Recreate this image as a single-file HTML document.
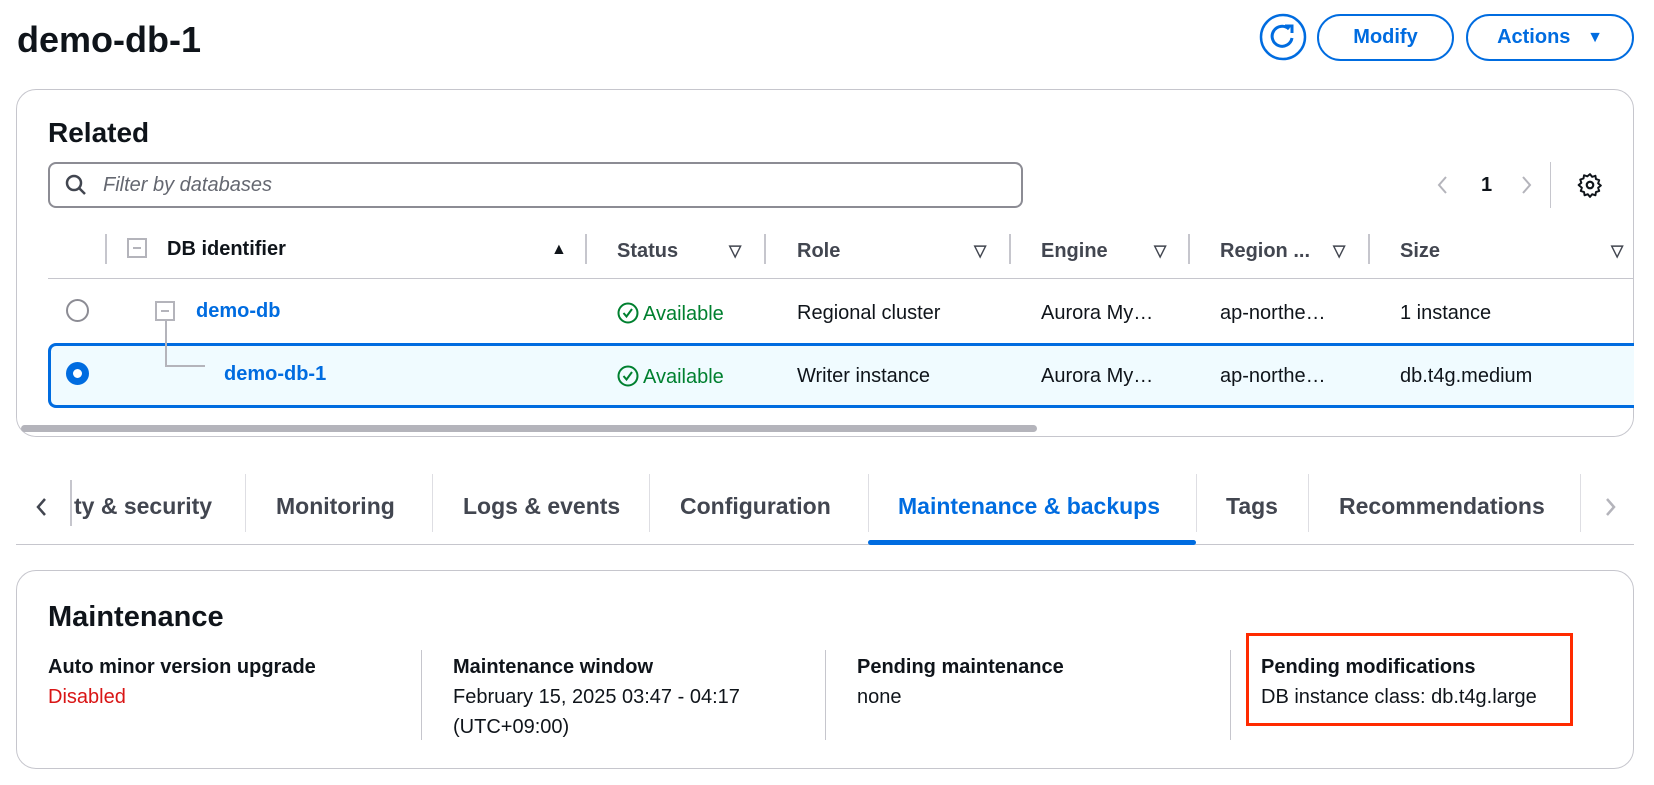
<!DOCTYPE html>
<html><head><meta charset="utf-8"><style>
*{box-sizing:border-box;margin:0;padding:0}
body{width:1654px;height:785px;background:#fff;font-family:"Liberation Sans",sans-serif;color:#0f141a;position:relative;overflow:hidden}
.a{position:absolute;white-space:nowrap}
.b{font-weight:bold}
.t{font-size:20px;line-height:22px}
.lnk{color:#006ce0;font-weight:bold}
.vd{position:absolute;width:2px;background:#c6c6cd}
.btn{position:absolute;border:2px solid #006ce0;border-radius:24px;color:#006ce0;font-weight:bold;font-size:20px;display:flex;align-items:center;justify-content:center;height:47px;top:14px}
.panel{position:absolute;border:1px solid #c6c6cd;border-radius:20px;left:16px;width:1618px}
.tab{position:absolute;top:493px;font-size:23px;font-weight:bold;color:#424650}
.tdv{position:absolute;top:474px;height:58px;width:1px;background:#dedee3}
.ok{color:#00802f}
.ok svg{vertical-align:-4px;margin-right:4px}
.srt{position:absolute;font-size:16px;color:#424650;font-weight:bold}
</style></head><body>
<div class="a b" style="left:17px;top:19px;font-size:36px;line-height:42px">demo-db-1</div>

<svg class="a" style="left:1259px;top:13px" width="48" height="48" viewBox="0 0 48 48"><circle cx="24" cy="24" r="22" fill="none" stroke="#006ce0" stroke-width="2.5"/><path d="M30 16 A10 10 0 1 0 33 25" fill="none" stroke="#006ce0" stroke-width="3"/><path d="M26 13 L33 13 L33 20" fill="none" stroke="#006ce0" stroke-width="3"/></svg>
<div class="btn" style="left:1317px;width:137px">Modify</div>
<div class="btn" style="left:1466px;width:168px">Actions&nbsp;&nbsp;&nbsp;<span style="font-size:16px">▼</span></div>

<div class="panel" style="top:89px;height:348px"></div>
<div class="a b" style="left:48px;top:117px;font-size:28px;line-height:32px">Related</div>
<div class="a" style="left:48px;top:162px;width:975px;height:46px;border:2px solid #8c8c94;border-radius:8px"></div>
<svg class="a" style="left:64px;top:173px" width="24" height="24" viewBox="0 0 24 24"><circle cx="10" cy="10" r="7" fill="none" stroke="#424650" stroke-width="2.5"/><path d="M15 15 L21 21" stroke="#424650" stroke-width="2.5"/></svg>
<div class="a t" style="left:103px;top:174px;font-style:italic;color:#656871">Filter by databases</div>
<svg class="a" style="left:1433px;top:173px" width="20" height="24"><path d="M13 4 L6 12 L13 20" fill="none" stroke="#b4b4bb" stroke-width="2"/></svg>
<div class="a b t" style="left:1481px;top:174px">1</div>
<svg class="a" style="left:1516px;top:173px" width="20" height="24"><path d="M7 4 L14 12 L7 20" fill="none" stroke="#b4b4bb" stroke-width="2"/></svg>
<div class="vd" style="left:1550px;top:162px;height:46px;width:1px"></div>
<svg class="a" style="left:1577px;top:172px" width="26" height="26" viewBox="0 0 24 24"><path d="M12 2 l2 2.5 3-1 .5 3 3 1-1 3 2.5 2-2.5 2 1 3-3 1-.5 3-3-1-2 2.5-2-2.5-3 1-.5-3-3-1 1-3L1.5 12 4 10 3 7l3-1 .5-3 3 1z" fill="none" stroke="#0f141a" stroke-width="1.8" stroke-linejoin="round"/><circle cx="12" cy="12" r="3" fill="none" stroke="#0f141a" stroke-width="2"/></svg>

<!-- header -->
<div class="vd" style="left:105px;top:234px;height:30px"></div>
<div class="a" style="left:127px;top:238px;width:20px;height:20px;border:2px solid #b4b4bb"><div style="position:absolute;left:4px;top:7px;width:8px;height:2px;background:#b4b4bb"></div></div>
<div class="a b t" style="left:167px;top:238px">DB identifier</div>
<div class="srt" style="left:551px;top:241px;color:#0f141a">▲</div>
<div class="vd" style="left:585px;top:234px;height:30px"></div>
<div class="a b t" style="left:617px;top:240px;color:#424650">Status</div>
<div class="srt" style="left:729px;top:241px">▽</div>
<div class="vd" style="left:764px;top:234px;height:30px"></div>
<div class="a b t" style="left:797px;top:240px;color:#424650">Role</div>
<div class="srt" style="left:974px;top:241px">▽</div>
<div class="vd" style="left:1009px;top:234px;height:30px"></div>
<div class="a b t" style="left:1041px;top:240px;color:#424650">Engine</div>
<div class="srt" style="left:1154px;top:241px">▽</div>
<div class="vd" style="left:1188px;top:234px;height:30px"></div>
<div class="a b t" style="left:1220px;top:240px;color:#424650">Region ...</div>
<div class="srt" style="left:1333px;top:241px">▽</div>
<div class="vd" style="left:1368px;top:234px;height:30px"></div>
<div class="a b t" style="left:1400px;top:240px;color:#424650">Size</div>
<div class="srt" style="left:1611px;top:241px">▽</div>
<div class="a" style="left:48px;top:278px;width:1586px;height:1px;background:#c6c6cd"></div>

<!-- row1 -->
<div class="a" style="left:66px;top:299px;width:23px;height:23px;border:2px solid #8c8c94;border-radius:50%"></div>
<div class="a" style="left:155px;top:301px;width:20px;height:20px;border:2px solid #b4b4bb"><div style="position:absolute;left:4px;top:7px;width:8px;height:2px;background:#b4b4bb"></div></div>
<div class="a" style="left:165px;top:321px;width:2px;height:45px;background:#b4b4bb"></div>
<div class="a t lnk" style="left:196px;top:300px">demo-db</div>
<div class="a t ok" style="left:617px;top:302px"><svg width="22" height="22" viewBox="0 0 22 22"><circle cx="11" cy="11" r="9.5" fill="none" stroke="#00802f" stroke-width="2"/><path d="M6.5 11 L9.5 14.5 L15 7" fill="none" stroke="#00802f" stroke-width="2"/></svg>Available</div>
<div class="a t" style="left:797px;top:302px">Regional cluster</div>
<div class="a t" style="left:1041px;top:302px">Aurora My…</div>
<div class="a t" style="left:1220px;top:302px">ap-northe…</div>
<div class="a t" style="left:1400px;top:302px">1 instance</div>

<!-- row2 -->
<div class="a" style="left:48px;top:343px;width:1586px;height:65px;background:#f0fbff;border:3px solid #006ce0;border-radius:8px 0 0 8px;border-right:none"></div>
<div class="a" style="left:165px;top:321px;width:2px;height:45px;background:#b4b4bb"></div>
<div class="a" style="left:165px;top:365px;width:40px;height:2px;background:#b4b4bb"></div>
<div class="a" style="left:66px;top:362px;width:23px;height:23px;border:7px solid #006ce0;border-radius:50%;background:#fff"></div>
<div class="a t lnk" style="left:224px;top:363px">demo-db-1</div>
<div class="a t ok" style="left:617px;top:365px"><svg width="22" height="22" viewBox="0 0 22 22"><circle cx="11" cy="11" r="9.5" fill="none" stroke="#00802f" stroke-width="2"/><path d="M6.5 11 L9.5 14.5 L15 7" fill="none" stroke="#00802f" stroke-width="2"/></svg>Available</div>
<div class="a t" style="left:797px;top:365px">Writer instance</div>
<div class="a t" style="left:1041px;top:365px">Aurora My…</div>
<div class="a t" style="left:1220px;top:365px">ap-northe…</div>
<div class="a t" style="left:1400px;top:365px">db.t4g.medium</div>
<div class="a" style="left:17px;top:412px;width:1616px;height:24px;background:#fff;border-radius:0 0 20px 20px"></div>
<div class="a" style="left:21px;top:425px;width:1016px;height:7px;background:#b4b4bb;border-radius:4px"></div>

<!-- tabs -->
<svg class="a" style="left:32px;top:494px" width="20" height="26"><path d="M13 5 L6 13 L13 21" fill="none" stroke="#424650" stroke-width="2.5"/></svg>
<div class="a" style="left:70px;top:480px;width:2px;height:46px;background:#c6c6cd"></div>
<div class="tab" style="left:74px">ty &amp; security</div>
<div class="tdv" style="left:245px"></div>
<div class="tab" style="left:276px">Monitoring</div>
<div class="tdv" style="left:432px"></div>
<div class="tab" style="left:463px">Logs &amp; events</div>
<div class="tdv" style="left:649px"></div>
<div class="tab" style="left:680px">Configuration</div>
<div class="tdv" style="left:868px"></div>
<div class="tab" style="left:898px;color:#006ce0">Maintenance &amp; backups</div>
<div class="tdv" style="left:1196px"></div>
<div class="tab" style="left:1226px">Tags</div>
<div class="tdv" style="left:1308px"></div>
<div class="tab" style="left:1339px">Recommendations</div>
<div class="tdv" style="left:1580px"></div>
<svg class="a" style="left:1600px;top:494px" width="20" height="26"><path d="M7 5 L14 13 L7 21" fill="none" stroke="#b4b4bb" stroke-width="2.5"/></svg>
<div class="a" style="left:16px;top:544px;width:1618px;height:1px;background:#c6c6cd"></div>
<div class="a" style="left:868px;top:540px;width:328px;height:5px;background:#006ce0;border-radius:3px"></div>

<!-- maintenance -->
<div class="panel" style="top:570px;height:199px"></div>
<div class="a b" style="left:48px;top:600px;font-size:29px;line-height:34px">Maintenance</div>
<div class="a b t" style="left:48px;top:656px">Auto minor version upgrade</div>
<div class="a t" style="left:48px;top:686px;color:#d91515">Disabled</div>
<div class="vd" style="left:421px;top:650px;height:90px;width:1px"></div>
<div class="a b t" style="left:453px;top:656px">Maintenance window</div>
<div class="a t" style="left:453px;top:686px">February 15, 2025 03:47 - 04:17</div>
<div class="a t" style="left:453px;top:716px">(UTC+09:00)</div>
<div class="vd" style="left:825px;top:650px;height:90px;width:1px"></div>
<div class="a b t" style="left:857px;top:656px">Pending maintenance</div>
<div class="a t" style="left:857px;top:686px">none</div>
<div class="vd" style="left:1230px;top:650px;height:90px;width:1px"></div>
<div class="a b t" style="left:1261px;top:656px">Pending modifications</div>
<div class="a t" style="left:1261px;top:686px">DB instance class: db.t4g.large</div>
<div class="a" style="left:1246px;top:633px;width:327px;height:93px;border:3px solid #ff2a00"></div>
</body></html>
